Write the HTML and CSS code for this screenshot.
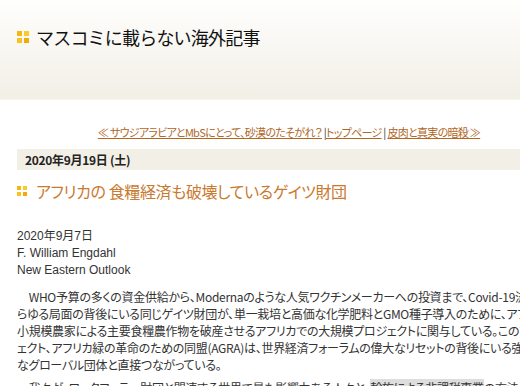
FILE: index.html
```html
<!DOCTYPE html>
<html lang="ja">
<head>
<meta charset="utf-8" />
<title>マスコミに載らない海外記事: アフリカの 食糧経済も破壊しているゲイツ財団</title>
<link rel="stylesheet" href="styles.css">
</head>

<body>
	<div class="banner">
		<h1 class="blogTit"><span class="mark"><i></i><i></i><i></i><i></i></span>マスコミに載らない海外記事</h1>
	</div>
	<div class="content">
		<div class="pager">
			<a href="#">≪ サウジアラビアとMbSにとって、砂漠のたそがれ？</a> |<a href="#">トップページ</a> | <a href="#">皮肉と真実の暗殺 ≫</a>
		</div>
		<h2 class="dateHeader">2020年9月19日 (土)</h2>
		<h3 class="entryTit"><span class="mark small"><i></i><i></i><i></i><i></i></span>アフリカの 食糧経済も破壊しているゲイツ財団</h3>
		<div class="entryBody">
			<p class="byline">2020年9月7日<br />F. William Engdahl<br />New Eastern Outlook</p>
			<p>　WHO予算の多くの資金供給から、Modernaのような人気ワクチンメーカーへの投資まで、Covid-19流行のあ<br />らゆる局面の背後にいる同じゲイツ財団が、単一栽培と高価な化学肥料とGMO種子導入のために、アフリカの<br />小規模農家による主要食糧農作物を破産させるアフリカでの大規模プロジェクトに関与している。このプロジ<br />ェクト、アフリカ緑の革命のための同盟(AGRA)は、世界経済フォーラムの偉大なリセットの背後にいる強力<br />なグローバル団体と直接つながっている。</p>
			<p>　我々が、ロックフェラー財団と関連する世界で最も影響力ある人々と、<span class="hl">斡旋による非課税事業</span>の方法の</p>
		</div>
	</div>
</body>
</html>
```

FILE: styles.css
```css
*{ padding:0; margin:0;}
html{ overflow:hidden;}
body{ background:#FFF; color:#333; font-family:"Liberation Sans","Noto Sans CJK JP",sans-serif; font-size:12px;}

.banner{ height:100px; padding:25px 0 0 17px; box-sizing:border-box; background:linear-gradient(#FEFEFD,#F2EFE6); border-bottom:1px solid #F7F5F0;}
.blogTit{ display:flex; align-items:center; gap:7px; font-size:18px; line-height:24px; font-weight:normal; color:#111; letter-spacing:-0.8px; font-family:"Noto Sans CJK JP",sans-serif;}

.mark{ display:grid; grid-template-columns:5px 5px; grid-auto-rows:5px; gap:2px;}
.mark i{ background:#F6B80E;}
.mark i:nth-child(2){ background:#FBCB2E;}
.mark i:nth-child(3){ background:#FAC21E;}
.mark i:nth-child(4){ background:#F2AA08;}
.mark.small{ grid-template-columns:4px 4px; grid-auto-rows:4px;}

.content{ width:544px; margin-left:17px;}

.pager{ margin-top:24px; text-align:center; line-height:17px; font-size:11px; letter-spacing:-0.7px; color:#333; font-family:"Noto Sans CJK JP",sans-serif; font-feature-settings:"palt";}
.pager a{ color:#B0671F;}

.dateHeader{ margin-top:8px; height:21px; line-height:21px; padding-left:8px; background:#F2EFE7; font-size:12px; letter-spacing:-0.3px; color:#222; font-family:"Noto Sans CJK JP",sans-serif;}

.entryTit{ display:flex; align-items:center; gap:9px; margin-top:10px; line-height:22px; font-size:16px; font-weight:normal; color:#C97A2F; font-family:"Noto Sans CJK JP",sans-serif; font-feature-settings:"palt"; letter-spacing:-0.4px;}

.entryBody{ margin-top:26px; line-height:17px; white-space:nowrap; letter-spacing:-0.3px; font-family:"Noto Sans CJK JP",sans-serif; font-feature-settings:"palt";}
.entryBody p{ margin-bottom:6px;}
.entryBody .byline{ margin-bottom:9px; letter-spacing:0; font-family:"Liberation Sans","Noto Sans CJK JP",sans-serif;}
.hl{ background:#DDD;}
```
